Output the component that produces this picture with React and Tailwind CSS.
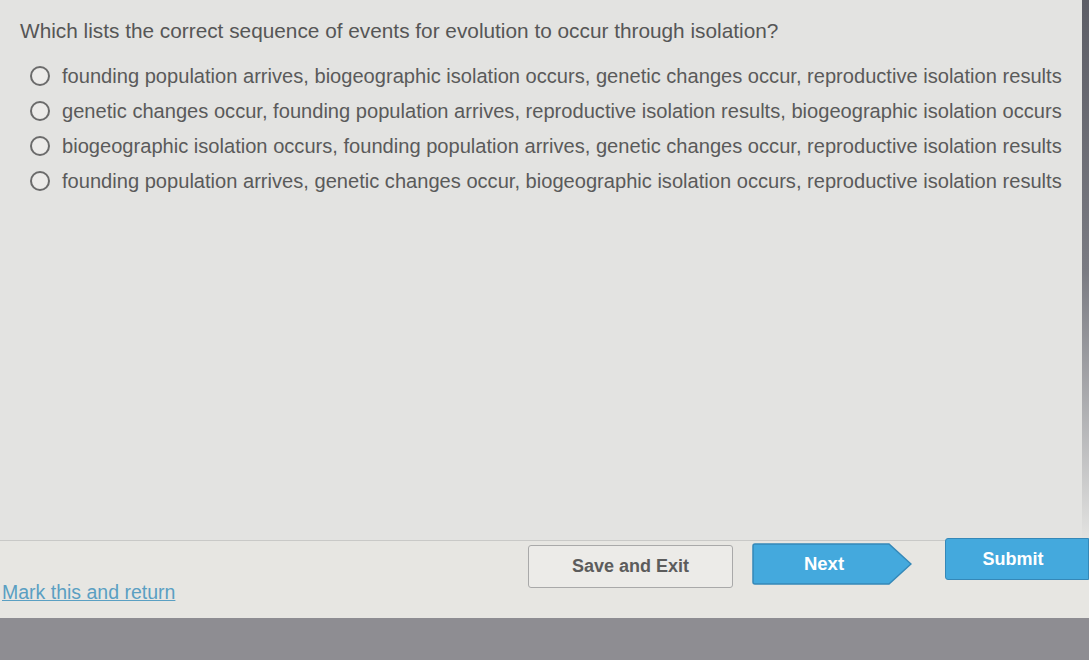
import React, { useState } from 'react';

const options = [
    'founding population arrives, biogeographic isolation occurs, genetic changes occur, reproductive isolation results',
    'genetic changes occur, founding population arrives, reproductive isolation results, biogeographic isolation occurs',
    'biogeographic isolation occurs, founding population arrives, genetic changes occur, reproductive isolation results',
    'founding population arrives, genetic changes occur, biogeographic isolation occurs, reproductive isolation results',
];

const App = () => {
    const [selected, setSelected] = useState(null);

    return (
        <div className="w-[1089px] h-[660px] overflow-hidden flex flex-col bg-[#e3e3e1] font-['Liberation_Sans',Arial,sans-serif]">
            <div className="flex flex-1 min-h-0">
                <div className="flex-1 min-w-0 pl-[20px] pt-[19px]">
                    <h1 className="text-[20.8px] leading-[24px] text-[#565656] whitespace-nowrap">
                        Which lists the correct sequence of events for evolution to occur through isolation?
                    </h1>
                    <div className="mt-[21px] flex flex-col gap-[11px]">
                        {options.map((opt, i) => (
                            <label
                                key={i}
                                className="flex items-center gap-[12px] pl-[10px] cursor-pointer"
                                onClick={() => setSelected(i)}
                            >
                                <span className="w-[20px] h-[20px] rounded-full border-2 border-[#6b6b6b] bg-[#ecebe9] flex items-center justify-center shrink-0">
                                    {selected === i && <span className="w-[9px] h-[9px] rounded-full bg-[#555]" />}
                                </span>
                                <span className="text-[20.1px] leading-[24px] text-[#5a5a5a] whitespace-nowrap">
                                    {opt}
                                </span>
                            </label>
                        ))}
                    </div>
                </div>
                <div className="w-[7px] shrink-0 bg-gradient-to-b from-[#5d5e66] via-[#7a7b82] to-[#e3e3e1]" />
            </div>
            <div className="h-[78px] border-t border-[#c9c9c7] bg-[#e7e6e2] flex items-start relative">
                <a href="#" className="absolute left-[2px] top-[37px] text-[19.5px] text-[#5a9fc2] underline">
                    Mark this and return
                </a>
                <div className="ml-[528px] mt-[4px] flex items-start">
                    <button className="w-[205px] h-[43px] rounded-[3px] border border-[#a9a9a9] bg-[#ecebe8] text-[18px] font-bold text-[#5c5c5c]">
                        Save and Exit
                    </button>
                    <div className="ml-[19px] -mt-[2px] relative w-[160px] h-[42px]">
                        <svg width="160" height="42" className="absolute inset-0">
                            <path d="M3 1 H137 L159 21 L137 41 H3 Q1 41 1 39 V3 Q1 1 3 1 Z" fill="#44a9dd" stroke="#3588b8" strokeWidth="1.5" />
                        </svg>
                        <span className="absolute inset-0 flex items-center justify-center pr-[16px] text-[18.5px] font-bold text-white">
                            Next
                        </span>
                    </div>
                    <button className="ml-[33px] -mt-[7px] w-[144px] h-[42px] rounded-l-[3px] border border-[#3588b8] bg-[#44a9dd] text-[18px] font-bold text-white pr-[8px]">
                        Submit
                    </button>
                </div>
            </div>
            <div className="h-[42px] bg-[#8e8d92]" />
        </div>
    );
};

export default App;
